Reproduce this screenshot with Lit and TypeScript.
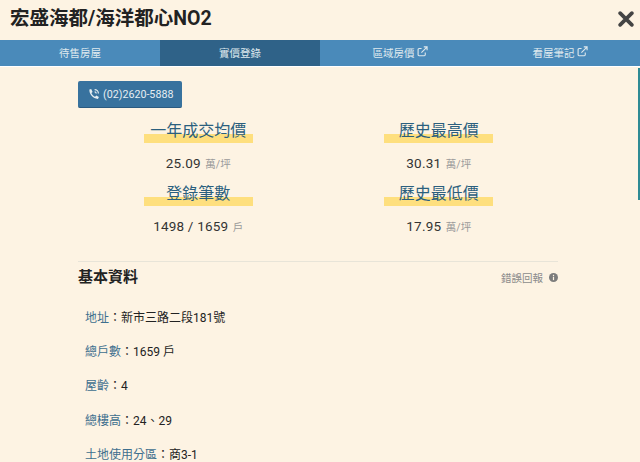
import { LitElement, html, css } from "lit";
import { customElement } from "lit/decorators.js";

const extIcon = html`<svg class="ext" viewBox="0 0 12 12" width="12" height="12" fill="none" stroke="currentColor" stroke-width="1.2"><path d="M9 7v2.6a1 1 0 0 1-1 1H2.2a1 1 0 0 1-1-1V3.8a1 1 0 0 1 1-1H5"/><path d="M4.8 7.2 10.6 1.400M7.400 1h3.600v3.600" /></svg>`;

const stats = [
  { t: "一年成交均價", v: "25.09", u: "萬/坪" },
  { t: "歷史最高價", v: "30.31", u: "萬/坪" },
  { t: "登錄筆數", v: "1498 / 1659", u: "戶" },
  { t: "歷史最低價", v: "17.95", u: "萬/坪" },
];
const rows = [
  ["地址", "新市三路二段181號"],
  ["總戶數", "1659 戶"],
  ["屋齡", "4"],
  ["總樓高", "24、29"],
  ["土地使用分區", "商3-1"],
];

@customElement("app-root")
export class AppRoot extends LitElement {
  static styles = css`
    :host {
      display: block;
      position: relative;
      width: 640px;
      height: 462px;
      overflow: hidden;
      background: #fdf3e3;
      color: #222;
      font-family: Roboto, "Noto Sans CJK TC", sans-serif;
    }
    .head {
      height: 40px;
      display: flex;
      align-items: center;
      justify-content: space-between;
      padding: 0 6px 3px 10px;
      box-sizing: border-box;
    }
    h1 {
      margin: 0;
      font-size: 19.5px;
      font-weight: 700;
      color: #222;
      line-height: 24px;
    }
    .close { display: block; }
    .tabs {
      display: grid;
      grid-template-columns: repeat(4, 1fr);
      height: 27px;
      box-sizing: border-box;
      border-bottom: 1px solid #fff;
      background: #4a8aba;
    }
    .tab {
      display: flex;
      align-items: center;
      justify-content: center;
      gap: 2px;
      font-size: 10.5px;
      color: #dfe9ee;
      padding-bottom: 1px;
      box-sizing: border-box;
    }
    .tab.on { background: #2f6288; }
    .ext { width: 11px; height: 11px; margin-top: -2px; }
    .body { padding: 14px 81px 0 78px; }
    .call {
      display: inline-flex;
      align-items: center;
      gap: 3px;
      height: 27px;
      width: 104px;
      box-sizing: border-box;
      padding-left: 10px;
      background: #38729e;
      color: #e6eef2;
      font-size: 10.7px;
      border-radius: 2px;
      border-bottom: 1px solid #2a5a80;
    }
    .stats {
      display: grid;
      grid-template-columns: 1fr 1fr;
      column-gap: 0;
      margin-top: 10px;
    }
    .stat {
      display: flex;
      flex-direction: column;
      align-items: center;
      height: 63px;
    }
    .title {
      width: 109px;
      height: 25px;
      line-height: 26px;
      text-align: center;
      font-size: 16px;
      color: #2b5f7e;
      background: linear-gradient(#fedf7e, #fedf7e) 0 bottom / 100% 9px no-repeat;
      white-space: nowrap;
    }
    .val {
      margin-top: 11px;
      font-size: 13.5px;
      line-height: 18px;
      letter-spacing: 0.2px;
      color: #333;
    }
    .val small { font-size: 10.500px; color: #9a9a9a; margin-left: 1px; letter-spacing: 0; }
    .sec {
      margin: 17px 1px 0 0;
      border-top: 1px solid #e8e4d8;
      display: flex;
      justify-content: space-between;
      align-items: center;
      padding-top: 5px;
    }
    h2 { margin: 0; font-size: 15px; font-weight: 700; color: #222; line-height: 20px; }
    .report {
      display: flex;
      align-items: center;
      gap: 6px;
      font-size: 10.500px;
      color: #8c8c8c;
    }
    .list { padding: 12px 0 0 7px; }
    .row {
      height: 34.400px;
      display: flex;
      align-items: center;
      font-size: 12px;
      color: #222;
      white-space: nowrap;
    }
    .row span { color: #3d6f8e; }
    .bar {
      position: absolute;
      right: 0;
      top: 68px;
      width: 2px;
      height: 132px;
      background: #2e8a94;
    }
  `;

  render() {
    return html`
      <div class="head">
        <h1>宏盛海都/海洋都心NO2</h1>
        <svg class="close" width="16" height="16" viewBox="0 0 15 15" stroke="#444" stroke-width="3.400" stroke-linecap="round"><path d="M2 2l11 11M13 2 2 13"/></svg>
      </div>
      <div class="tabs">
        <div class="tab">待售房屋</div>
        <div class="tab on">實價登錄</div>
        <div class="tab">區域房價 ${extIcon}</div>
        <div class="tab">看屋筆記 ${extIcon}</div>
      </div>
      <div class="body">
        <div class="call">
          <svg width="12" height="12" viewBox="0 0 12 12" fill="#e6eef2"><path d="M3.200 1 1.400 1.600C.9 5.800 4.900 10.700 9.900 11l1-1.900-2.600-1.500-1.200 1.200C5.600 8.200 4 6.500 3.400 5l1.200-1.100Z"/><path d="M6.600 1v1.200a3.200 3.200 0 0 1 3.200 3.200H11A4.400 4.400 0 0 0 6.600 1Zm0 2.200v1.200a1 1 0 0 1 1 1h1.200a2.200 2.200 0 0 0-2.200-2.200Z"/></svg>
          (02)2620-5888
        </div>
        <div class="stats">
          ${stats.map(
            (s) => html`<div class="stat">
              <div class="title">${s.t}</div>
              <div class="val">${s.v} <small>${s.u}</small></div>
            </div>`
          )}
        </div>
        <div class="sec">
          <h2>基本資料</h2>
          <div class="report">
            錯誤回報
            <svg width="9" height="9" viewBox="0 0 9 9"><circle cx="4.500" cy="4.500" r="4.500" fill="#7c7c7c"/><rect x="3.900" y="3.700" width="1.200" height="3.400" fill="#fdf3e3"/><rect x="3.900" y="1.800" width="1.200" height="1.200" fill="#fdf3e3"/></svg>
          </div>
        </div>
        <div class="list">
          ${rows.map((r) => html`<div class="row"><span>${r[0]}</span>：${r[1]}</div>`)}
        </div>
      </div>
      <div class="bar"></div>
    `;
  }
}
